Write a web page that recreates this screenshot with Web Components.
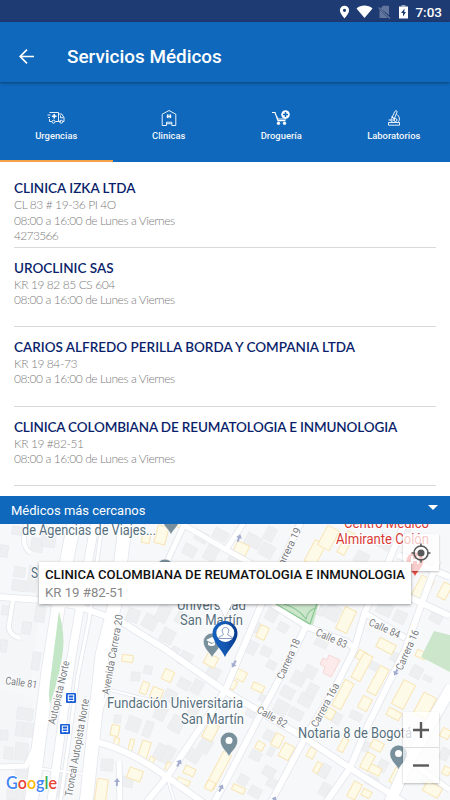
<!DOCTYPE html>
<html lang="es">
<head>
<meta charset="utf-8">
<title>Servicios Médicos</title>
<style>
  body {
    margin: 0;
    background: #fff;
    font-family: Roboto, sans-serif;
  }
</style>
</head>
<body>
<medical-services-app></medical-services-app>

<script>
class StatusBar extends HTMLElement {
  constructor() {
    super();
    this.attachShadow({ mode: "open" });
  }

  static get styles() {
    return `
      :host {
        display: flex;
        align-items: center;
        justify-content: flex-end;
        box-sizing: border-box;
        height: 22px;
        padding: 1px 8px 0 0;
        background: #1f3b73;
        color: #fff;
        font-size: 13.5px;
        font-weight: 500;
      }

      svg {
        display: block;
        margin-right: 7px;
        overflow: visible;
      }
    `;
  }

  connectedCallback() {
    this.shadowRoot.innerHTML = `
    <style>${StatusBar.styles}</style>
    <svg width="68" height="14" viewBox="0 0 68 14">
      <path fill="#fff" fill-rule="evenodd" d="M4.500 .7a4.600 4.600 0 0 0-4.600 4.600c0 3.200 4.600 8.200 4.600 8.200s4.600-5 4.600-8.200A4.600 4.600 0 0 0 4.500 .7zm0 3a1.600 1.600 0 1 1 0 3.200 1.600 1.600 0 0 1 0-3.200z"/>
      <path fill="#fff" d="M16.500 3.400C21-.4 28-.4 32.500 3.400L24.500 13z"/>
      <path fill="#62759c" d="M43 .8h6V10L40.500 3.500zM39.500 4.500L48 13h-8.500z"/>
      <path stroke="#62759c" stroke-width="1.200" d="M38.500 2.500L50 13.500"/>
      <path fill="#9aa7c2" d="M61.500 0h4v1.500h-4z"/>
      <path fill="#fff" fill-rule="evenodd" d="M59 1.500h9V13.500h-9zM64.500 3.500L61 8h2v3.500L66 7h-1.700z"/>
    </svg>
    <span>7:03</span>`;
  }
}

class AppHeader extends HTMLElement {
  constructor() {
    super();
    this.attachShadow({ mode: "open" });
  }

  static get styles() {
    return `
      :host {
        display: flex;
        align-items: center;
        box-sizing: border-box;
        height: 60px;
        padding: 9px 0 0 19px;
        background: #0f68bb;
        box-shadow: 0 1px 3px rgba(0, 0, 0, 0.4);
        color: #fff;
        position: relative;
        z-index: 1;
      }

      svg {
        display: block;
        margin-right: 33px;
      }

      h1 {
        margin: 0;
        font-size: 18.9px;
        font-weight: 500;
      }
    `;
  }

  connectedCallback() {
    this.shadowRoot.innerHTML = `
    <style>${AppHeader.styles}</style>
    <svg width="15" height="15" viewBox="0 0 15 15" fill="none" stroke="#fff" stroke-width="1.700">
      <path d="M15 7.500H1.500M8 .7L1.200 7.500L8 14.300"/>
    </svg>
    <h1><slot></slot></h1>`;
  }
}

const TAB_ICONS = {
  ambulance: `<path d="M2.500 3.500h9v9H8.300M4.700 12.500H2.500V10M.500 6h3M1 8.500h2M11.500 5h3.200l2.300 3.500v4h-1.200M13.800 12.500h-2.300M13.500 6.500v2.200h3"/>
    <circle cx="6.500" cy="12.700" r="1.500"/><circle cx="14.200" cy="12.700" r="1.500"/>
    <path stroke-width="1.500" d="M7.200 5v4.600M4.900 7.300h4.600"/>`,
  clinic: `<path d="M2.200 16.500V5.200L9 1.500l6.800 3.700v11.300h-4v-3.300H6.500v3.300zM6.500 14.700h5.300"/>
    <circle cx="9" cy="7.300" r="2.400" fill="#fff" fill-opacity=".35" stroke="none"/>
    <path stroke-width="1.200" d="M7.500 5.600v3.400M10.500 5.600v3.400M7.500 7.300h3"/>`,
  cart: `<path stroke-width="1.200" d="M0 3.500h3l3 8.200h7.500M4.700 7.500l1 2.500h8.500"/>
    <circle cx="6.500" cy="14.300" r="1.300" fill="#fff"/><circle cx="12.500" cy="14.300" r="1.300" fill="#fff"/>
    <circle cx="13.500" cy="5.500" r="4.300" fill="#fff" stroke="none"/>
    <path stroke="#0f68bb" stroke-width="1.500" d="M13.500 3v5M11 5.500h5"/>`,
  microscope: `<path d="M9.800 2.500l1.500-1 .8 1.400L9.300 9.600 7 8.500zM6.200 7.800l4 2M11.500 5.200c3 1.800 4 5.400 1.500 8.300M3.500 11h6.500M7.500 8.500c-3 2.800-1.500 4.500 1.200 5M3.500 16.200v-2.700h11v2.700z"/>
    <circle cx="10.500" cy="11" r="1.500"/>`
};

class ServiceTab extends HTMLElement {
  constructor() {
    super();
    this.attachShadow({ mode: "open" });
  }

  static get styles() {
    return `
      :host {
        display: flex;
        flex-direction: column;
        align-items: center;
        flex: 1;
        box-sizing: border-box;
        padding-top: 27px;
        border-bottom: 2px solid transparent;
        color: #f3f7fc;
        font-size: 9.4px;
        font-weight: 500;
        line-height: 12px;
      }

      :host([active]) {
        border-bottom-color: #f5a04a;
      }

      svg {
        display: block;
        margin-bottom: 3px;
      }
    `;
  }

  connectedCallback() {
    this.shadowRoot.innerHTML = `
    <style>${ServiceTab.styles}</style>
    <svg width="18" height="18" viewBox="0 0 18 18" fill="none" stroke="#fff" stroke-width=".9">
      ${TAB_ICONS[this.getAttribute("icon")]}
    </svg>
    <slot></slot>`;
  }
}

class ServiceTabs extends HTMLElement {
  constructor() {
    super();
    this.attachShadow({ mode: "open" });
  }

  static get styles() {
    return `
      :host {
        display: flex;
        height: 80px;
        background: #0f68bb;
      }
    `;
  }

  connectedCallback() {
    this.shadowRoot.innerHTML = `
    <style>${ServiceTabs.styles}</style>
    <slot></slot>`;
  }
}

class ClinicRow extends HTMLElement {
  constructor() {
    super();
    this.attachShadow({ mode: "open" });
  }

  static get styles() {
    return `
      :host {
        display: block;
        box-sizing: border-box;
        height: 79.4px;
        padding-top: 12px;
        border-bottom: 1px solid #d9d9d9;
        color: #7c7c7c;
        font-family: Lato, sans-serif;
        font-size: 12px;
        font-weight: 300;
        line-height: 15.2px;
      }

      h2 {
        margin: 0;
        color: #0a1f6b;
        font-size: 13.5px;
        font-weight: 600;
        line-height: 17px;
        white-space: nowrap;
      }

      :host([condensed]) h2 {
        letter-spacing: -0.14px;
      }

      p {
        margin: 0;
        letter-spacing: -0.42px;
      }

      .phone {
        letter-spacing: -0.65px;
      }
    `;
  }

  connectedCallback() {
    const phone = this.getAttribute("phone");
    this.shadowRoot.innerHTML = `
    <style>${ClinicRow.styles}</style>
    <h2><slot></slot></h2>
    <p>${this.getAttribute("address")}</p>
    <p>${this.getAttribute("hours")}</p>
    ${phone ? `<p class="phone">${phone}</p>` : ""}`;
  }
}

class NearbyBar extends HTMLElement {
  constructor() {
    super();
    this.attachShadow({ mode: "open" });
  }

  static get styles() {
    return `
      :host {
        display: flex;
        align-items: center;
        justify-content: space-between;
        box-sizing: border-box;
        height: 28px;
        padding: 1px 12px 0 11px;
        background: #0f68bb;
        color: #fff;
        font-size: 13px;
      }

      .caret {
        border: 5px solid transparent;
        border-top: 5px solid #fff;
        border-bottom: 0;
        margin-bottom: 6px;
      }
    `;
  }

  connectedCallback() {
    this.shadowRoot.innerHTML = `
    <style>${NearbyBar.styles}</style>
    <span><slot></slot></span>
    <div class="caret"></div>`;
  }
}

// [x, y, width, height, rotation]
const BLOCKS = [
  [12, 527, 14, 8, 8], [31, 538, 12, 14, 8], [42, 527, 14, 20, 8], [0, 545, 8, 12, 8],
  [14, 567, 11, 10, 8], [12, 580, 14, 11, 8], [28, 566, 9, 26, 8], [2, 606, 10, 9, 8],
  [22, 622, 9, 12, 8], [35, 606, 10, 16, 8], [0, 640, 7, 12, 8], [32, 652, 8, 18, 8],
  [17, 708, 16, 12, 8], [16, 722, 7, 14, 8], [0, 730, 8, 10, 0], [24, 723, 9, 14, 8],
  [4, 747, 9, 12, 6], [15, 743, 13, 17, 6], [15, 770, 14, 8, 4], [7, 788, 17, 12, 4],
  [57, 772, 9, 25, 8], [101, 759, 12, 12, 4], [122, 777, 11, 10, 10],
  [127, 609, 12, 13, 20], [143, 615, 14, 14, 28], [157, 604, 12, 18, 28], [161, 629, 13, 14, 28],
  [176, 612, 11, 12, 28], [131, 672, 9, 9, 5], [144, 666, 8, 8, 15], [114, 715, 7, 8, 5],
  [127, 717, 13, 14, 20], [144, 721, 8, 16, 20], [155, 706, 11, 14, 25], [170, 716, 13, 16, 28],
  [164, 690, 12, 12, 28], [178, 679, 12, 10, 28], [192, 680, 10, 14, 30], [188, 706, 10, 10, 28],
  [155, 744, 10, 16, 28], [163, 746, 10, 18, 28], [199, 738, 12, 15, 32], [188, 750, 12, 12, 32],
  [171, 647, 8, 9, 28], [179, 652, 12, 14, 28], [207, 667, 13, 11, 28],
  [183, 545, 13, 11, 28], [195, 532, 13, 10, 28], [205, 546, 12, 15, 28], [213, 530, 15, 10, 28],
  [229, 553, 14, 10, 28], [245, 535, 16, 12, 28], [265, 527, 10, 14, 28], [260, 544, 14, 13, 28],
  [250, 621, 9, 11, 28], [266, 609, 11, 12, 28], [278, 623, 10, 9, 28], [261, 647, 10, 9, 28],
  [246, 641, 11, 13, 28], [310, 604, 14, 10, 25], [325, 605, 15, 15, 28], [315, 638, 13, 9, 25],
  [267, 661, 9, 8, 28], [292, 672, 13, 13, 28], [304, 666, 12, 12, 28], [281, 687, 13, 11, 28],
  [299, 694, 13, 12, 28], [274, 701, 14, 14, 28], [289, 709, 14, 10, 28], [307, 684, 10, 13, 28],
  [259, 695, 8, 7, 28], [246, 709, 9, 8, 28], [333, 713, 8, 11, 28], [350, 712, 12, 8, 25],
  [264, 731, 12, 10, 28], [250, 751, 11, 9, 28], [268, 747, 6, 9, 28], [238, 775, 10, 10, 28],
  [249, 787, 12, 10, 28], [263, 767, 12, 10, 28], [267, 779, 12, 9, 28], [320, 764, 9, 14, 28],
  [320, 783, 9, 13, 28], [360, 741, 10, 10, 25], [378, 760, 9, 12, 28], [366, 776, 12, 10, 28],
  [378, 534, 14, 15, 28], [355, 552, 13, 12, 28], [399, 522, 13, 8, 28], [393, 583, 15, 12, 28],
  [377, 603, 15, 12, 25], [394, 611, 12, 12, 25], [431, 609, 12, 14, 28], [411, 666, 11, 12, 28],
  [423, 676, 9, 5, 25], [365, 661, 13, 8, 28], [391, 653, 10, 9, 28], [424, 720, 8, 15, 28],
  [421, 776, 12, 9, 28], [440, 748, 9, 12, 28]
];

const SHOPS = [
  [142, 534, 8, 9, 10], [156, 526, 11, 18, 15], [177, 522, 8, 6, 20], [235, 543, 13, 11, 25],
  [236, 528, 5, 5, 25], [309, 541, 12, 24, 28], [322, 527, 13, 22, 28], [342, 531, 8, 24, 28],
  [416, 577, 14, 22, 28], [440, 583, 9, 16, 28], [340, 608, 12, 24, 25], [258, 626, 9, 13, 25],
  [377, 641, 18, 10, 28], [357, 651, 9, 9, 28], [122, 655, 11, 7, 8], [205, 655, 12, 11, 28],
  [163, 670, 10, 11, 25], [141, 682, 7, 12, 20], [151, 688, 11, 11, 22], [111, 725, 8, 11, 12],
  [114, 738, 5, 8, 8], [129, 739, 4, 13, 14], [140, 741, 9, 17, 18], [149, 757, 5, 7, 25],
  [128, 769, 14, 11, 20], [96, 779, 11, 22, 8], [166, 762, 4, 8, 25], [184, 767, 11, 8, 25],
  [177, 779, 13, 5, 22], [205, 723, 11, 17, 28], [214, 751, 9, 39, 28], [206, 781, 8, 9, 28],
  [234, 670, 12, 10, 28], [229, 680, 7, 9, 28], [252, 684, 12, 7, 25], [338, 680, 10, 29, 28],
  [357, 653, 10, 28, 28], [373, 666, 10, 29, 28], [360, 697, 10, 13, 28], [397, 681, 13, 27, 28],
  [387, 710, 14, 8, 28], [418, 694, 14, 23, 28], [326, 709, 8, 10, 28], [273, 734, 9, 13, 28],
  [281, 744, 11, 15, 28], [256, 742, 8, 8, 28], [308, 748, 7, 10, 28], [315, 762, 5, 11, 28],
  [340, 738, 6, 14, 28], [363, 753, 9, 17, 28], [371, 741, 12, 9, 28], [369, 766, 12, 8, 28],
  [232, 786, 13, 6, 25], [350, 782, 9, 17, 28], [362, 790, 9, 7, 28], [392, 768, 8, 16, 28],
  [424, 784, 17, 11, 28], [441, 729, 9, 9, 28], [443, 767, 7, 8, 25], [416, 651, 10, 7, 25]
];

// [path, width]
const ROADS = [
  ["M0 597L40 600L77 606L120 621L165 649L225 691L305 738L350 768L405 803", 6],
  ["M13 600L9 625Q8 635 20 638", 4],
  ["M26 523Q20 547 31 553", 4],
  ["M97 742Q130 750 167 777L205 804", 6],
  ["M145 804L167 777L225 691L262 603L303 518", 6],
  ["M213 804L225 783L258 719L292 655L308 622L320 600", 6],
  ["M270 804L305 738L335 688L354 650L365 612L390 558L406 520", 6],
  ["M325 804L350 768L368 725L405 650L423 600L438 560", 6],
  ["M389 804L407 765L452 686", 11],
  ["M272 604L308 627L347 642L354 648", 6],
  ["M363 612L405 638", 6],
  ["M404 595L450 616", 6],
  ["M398 555L450 577", 6],
  ["M165 566L184 525L225 549L252 564", 5],
  ["M225 551L247 518", 5],
  ["M418 767L450 790", 5],
  ["M167 777L175 804", 2],
  ["M110 690L150 700", 2],
  ["M109 690Q96 718 96 755L91 804", 2],
  ["M120 804L119 761", 5],
  ["M0 767L26 766L36 745", 5],
  ["M36 768L93 775", 2],
  ["M75 518L61 590L48 672L31 804", 13],
  ["M96 518L83 590L71 660L51 804", 8],
  ["M103 518L89 620L78 675L60 804", 3],
  ["M126 518L116 600L102 655L86 804", 13]
];

// [text, x, y, rotation, length]
const STREETS = [
  ["Calle 81", 5, 684, 8, 32],
  ["Autopista Norte", 55, 725, -77, 65],
  ["Troncal Autopista Norte", 72, 797, -80, 99],
  ["Avenida Carrera 20", 109, 695, -80, 81],
  ["Carrera 19", 281, 572, -64, 47],
  ["Carrera 18", 283, 680, -66, 43],
  ["Carrera 16a", 317, 728, -62, 48],
  ["Carrera 16", 402, 671, -66, 43],
  ["Calle 82", 256, 712, 29, 33],
  ["Calle 83", 315, 635, 24, 33],
  ["Calle 84", 368, 625, 24, 33]
];

const PLACES = [
  ["de Agencias de Viajes...", 22, 535, 134],
  ["S", 31, 578, 7],
  ["Universidad", 177, 610, 69],
  ["San Martín", 180, 625, 63],
  ["Fundación Universitaria", 107, 708, 136],
  ["San Martín", 181, 724, 63],
  ["Notaria 8 de Bogotá", 298, 738, 114]
];

const HOSPITAL = [
  ["Centro Médico", 344, 528, 85],
  ["Almirante Colón", 336, 544, 93]
];

class StreetMap extends HTMLElement {
  constructor() {
    super();
    this.attachShadow({ mode: "open" });
  }

  static get styles() {
    return `
      :host {
        display: block;
        flex: 1;
        position: relative;
        overflow: hidden;
        background: #f7f8fa;
      }

      svg {
        display: block;
      }

      text {
        font-family: Roboto, sans-serif;
        paint-order: stroke;
        stroke: #fff;
        stroke-width: 2px;
        stroke-linejoin: round;
      }

      .street {
        font-size: 10.6px;
        fill: #777b80;
      }

      .place {
        font-size: 14px;
        fill: #56707e;
      }

      .hospital {
        font-size: 14px;
        fill: #d93a36;
      }

      .logo {
        font-family: Lato, sans-serif;
        font-size: 17px;
        font-weight: 600;
      }
    `;
  }

  box([x, y, w, h, angle]) {
    return `<rect x="${x}" y="${y}" width="${w}" height="${h}" transform="rotate(${angle} ${x + w / 2} ${y + h / 2})"/>`;
  }

  road([d, width], casing) {
    return `<path d="${d}" stroke-width="${width + casing}"/>`;
  }

  label([text, x, y, length], name) {
    return `<text class="${name}" x="${x}" y="${y}" textLength="${length}" lengthAdjust="spacingAndGlyphs">${text}</text>`;
  }

  street([text, x, y, angle, length]) {
    return `<text class="street" transform="translate(${x} ${y}) rotate(${angle})" textLength="${length}" lengthAdjust="spacingAndGlyphs">${text}</text>`;
  }

  pin(x, y, color = "#78909c") {
    return `<path fill="${color}" stroke="#fff" stroke-width=".6" d="M${x} ${y}c-1.300-5-8.700-9-8.700-16.200a8.700 8.700 0 0 1 17.400 0c0 7.200-7.400 11.200-8.700 16.200z"/>`;
  }

  bus(x, y) {
    return `<g transform="translate(${x} ${y})">
      <rect width="10" height="10" rx="1" fill="#1a5fd8"/>
      <rect x="2.300" y="2" width="5.400" height="5.500" fill="none" stroke="#fff"/>
      <path stroke="#fff" d="M2 5h6M3 7v1.500M7 7v1.500"/>
    </g>`;
  }

  arrow(x, y, angle) {
    return `<path transform="translate(${x} ${y}) rotate(${angle})" fill="#a3add0" d="M0-4l3 4H1v4h-2V0h-2z"/>`;
  }

  connectedCallback() {
    this.shadowRoot.innerHTML = `
    <style>${StreetMap.styles}</style>
    <svg width="450" height="276" viewBox="0 524 450 276">
      <path fill="#f1f3f6" d="M0 600L40 603L30 690L0 683zM0 690L33 698L25 762L0 765z" opacity=".5"/>
      <g fill="#eeeff1" stroke="#e5e7ea" stroke-width=".5">${BLOCKS.map(b => this.box(b)).join("")}</g>
      <g fill="#fefae8" stroke="#f8e3b1" stroke-width=".9">${SHOPS.map(b => this.box(b)).join("")}</g>
      <path fill="#fcebea" stroke="#f5cfcd" stroke-width=".8" d="M329 655l11 5-9 17-8-4 2-6-5-3 3-6 4 2z"/>
      <path fill="#cbe6cb" d="M434 631L450 635V672L421 657z"/>
      <g fill="none" stroke="#e3e6ec">${ROADS.map(r => this.road(r, 1.6)).join("")}</g>
      <g fill="none" stroke="#fff">${ROADS.map(r => this.road(r, 0)).join("")}</g>
      <path fill="#cbe6cb" d="M274 602H319L313 625L306 623z"/>
      <path fill="none" stroke="#8bc894" stroke-width="1.200" d="M276 604L310 624L317 603M284 604q14 4 22 15q2-10 11-11"/>
      <path fill="#c3e6c6" d="M59 611Q65 635 63 650Q60 675 50 704Q48 697 50 682L54 650z"/>
      ${this.arrow(239, 538, 20)}
      ${this.arrow(234, 664, 208)}
      ${this.arrow(396, 672, 208)}
      ${this.arrow(179, 763, 28)}
      ${this.arrow(117, 782, 2)}
      ${this.arrow(221, 788, 28)}
      ${this.arrow(274, 800, 28)}
      ${STREETS.map(s => this.street(s)).join("")}
      ${this.bus(66, 693)}
      ${this.bus(60, 724)}
      ${this.pin(171, 535)}
      ${this.pin(165, 584)}
      ${this.pin(212, 658)}
      <path fill="#fff" d="M206 640l6-3 6 3-6 3zM208 642v3q4 2 7 0v-3l-3.500 2z"/>
      ${this.pin(229, 757)}
      <circle cx="229" cy="740.500" r="3.500" fill="#fff"/>
      ${this.pin(398.5, 770)}
      <circle cx="398.500" cy="753.500" r="3.500" fill="#fff"/>
      ${this.pin(415, 577, "#ea4d48")}
      <path fill="none" stroke="#fff" stroke-width="2" d="M412 556v8M418 556v8M412 560h6"/>
      ${PLACES.map(p => this.label(p, "place")).join("")}
      ${HOSPITAL.map(p => this.label(p, "hospital")).join("")}
      <defs>
        <linearGradient id="marker">
          <stop offset="0" stop-color="#1260bd"/>
          <stop offset=".5" stop-color="#1457b2"/>
          <stop offset="1" stop-color="#06398c"/>
        </linearGradient>
      </defs>
      <path fill="url(#marker)" d="M225 657C222 650 212.500 642 212.500 633.500a12.500 12.500 0 0 1 25 0C237.500 642 228 650 225 657z"/>
      <circle cx="225.300" cy="633" r="9" fill="#fff"/>
      <path fill="none" stroke="#6d83b8" stroke-width=".8" d="M223.500 634c-2-2-2-6.500 2-6.500s4 4.500 2 6.500c0 2 4.500 1.500 5 4.500h-14c.5-3 5-2.500 5-4.500z"/>
      <text class="logo" x="6" y="789" textLength="51" lengthAdjust="spacingAndGlyphs"><tspan fill="#4285f4">G</tspan><tspan fill="#ea4335">o</tspan><tspan fill="#fbbc05">o</tspan><tspan fill="#4285f4">g</tspan><tspan fill="#34a853">l</tspan><tspan fill="#ea4335">e</tspan></text>
    </svg>
    <slot></slot>`;
  }
}

class MapInfoWindow extends HTMLElement {
  constructor() {
    super();
    this.attachShadow({ mode: "open" });
  }

  static get styles() {
    return `
      :host {
        display: block;
        position: absolute;
        left: 39px;
        top: 38px;
        box-sizing: border-box;
        width: 372px;
        height: 42px;
        padding: 4px 6px;
        background: #fff;
        box-shadow: 0 1px 3px rgba(0, 0, 0, 0.4);
        color: #888;
        font-size: 13.2px;
        line-height: 18px;
        white-space: nowrap;
      }

      :host::after {
        content: "";
        position: absolute;
        left: 179px;
        top: 42px;
        border: 7px solid transparent;
        border-top: 14px solid #fff;
        border-bottom: 0;
        filter: drop-shadow(0 0 0.6px rgba(0, 0, 0, 0.5));
      }

      strong {
        display: block;
        color: #111;
        font-size: 13.15px;
        font-weight: 500;
      }
    `;
  }

  connectedCallback() {
    this.shadowRoot.innerHTML = `
    <style>${MapInfoWindow.styles}</style>
    <strong>${this.getAttribute("name")}</strong>
    <slot></slot>`;
  }
}

class MapControls extends HTMLElement {
  constructor() {
    super();
    this.attachShadow({ mode: "open" });
  }

  static get styles() {
    return `
      :host {
        display: flex;
        flex-direction: column;
        justify-content: space-between;
        position: absolute;
        right: 11px;
        top: 10px;
        bottom: 17px;
        width: 36px;
      }

      .panel {
        background: rgba(255, 255, 255, 0.72);
        box-shadow: 0 1px 2px rgba(0, 0, 0, 0.25);
      }

      svg {
        display: block;
        fill: none;
        stroke: #5a5a5a;
      }

      svg + svg {
        border-top: 1px solid #ddd;
      }
    `;
  }

  connectedCallback() {
    this.shadowRoot.innerHTML = `
    <style>${MapControls.styles}</style>
    <div class="panel">
      <svg width="36" height="37" viewBox="0 0 36 37" stroke-width="1.600">
        <circle cx="18" cy="19" r="7"/>
        <circle cx="18" cy="19" r="3.500" fill="#5a5a5a" stroke="none"/>
        <path d="M18 9.500V13M18 25v3.500M8.500 19H12M24 19h3.500"/>
      </svg>
    </div>
    <div class="panel">
      <svg width="36" height="35" viewBox="0 0 36 35" stroke-width="2.400"><path d="M10 18h16M18 10v16"/></svg>
      <svg width="36" height="35" viewBox="0 0 36 35" stroke-width="2.400"><path d="M10 17.500h16"/></svg>
    </div>`;
  }
}

class MedicalServicesApp extends HTMLElement {
  constructor() {
    super();
    this.attachShadow({ mode: "open" });
  }

  static get styles() {
    return `
      :host {
        display: flex;
        flex-direction: column;
        width: 450px;
        height: 800px;
        overflow: hidden;
      }

      .list {
        box-sizing: border-box;
        height: 334px;
        padding: 6.4px 14px 0;
        background: #fff;
      }
    `;
  }

  connectedCallback() {
    const hours = "08:00 a 16:00 de Lunes a Viernes";
    this.shadowRoot.innerHTML = `
    <style>${MedicalServicesApp.styles}</style>
    <status-bar></status-bar>
    <app-header>Servicios Médicos</app-header>
    <service-tabs>
      <service-tab icon="ambulance" active>Urgencias</service-tab>
      <service-tab icon="clinic">Clinicas</service-tab>
      <service-tab icon="cart">Droguería</service-tab>
      <service-tab icon="microscope">Laboratorios</service-tab>
    </service-tabs>
    <div class="list">
      <clinic-row address="CL 83 # 19-36 PI 4O" hours="${hours}" phone="4273566">CLINICA IZKA LTDA</clinic-row>
      <clinic-row address="KR 19 82 85 CS 604" hours="${hours}">UROCLINIC SAS</clinic-row>
      <clinic-row address="KR 19 84-73" hours="${hours}">CARIOS ALFREDO PERILLA BORDA Y COMPANIA LTDA</clinic-row>
      <clinic-row address="KR 19 #82-51" hours="${hours}" condensed>CLINICA COLOMBIANA DE REUMATOLOGIA E INMUNOLOGIA</clinic-row>
    </div>
    <nearby-bar>Médicos más cercanos</nearby-bar>
    <street-map>
      <map-controls></map-controls>
      <map-info-window name="CLINICA COLOMBIANA DE REUMATOLOGIA E INMUNOLOGIA">KR 19 #82-51</map-info-window>
    </street-map>`;
  }
}

customElements.define("status-bar", StatusBar);
customElements.define("app-header", AppHeader);
customElements.define("service-tab", ServiceTab);
customElements.define("service-tabs", ServiceTabs);
customElements.define("clinic-row", ClinicRow);
customElements.define("nearby-bar", NearbyBar);
customElements.define("street-map", StreetMap);
customElements.define("map-info-window", MapInfoWindow);
customElements.define("map-controls", MapControls);
customElements.define("medical-services-app", MedicalServicesApp);
</script>
</body>
</html>
